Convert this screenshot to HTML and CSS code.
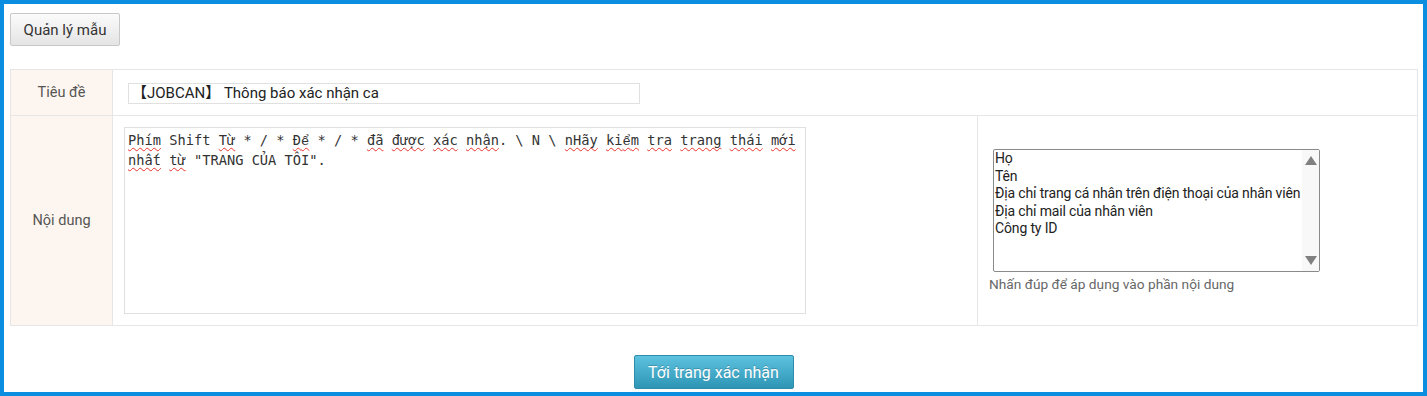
FILE: index.html
```html
<!DOCTYPE html>
<html>
<head>
  <title>Quản lý mẫu</title>
  <meta charset="utf-8">
  <link rel="stylesheet" href="styles.css">
</head>
<body>
  <div class="frame">
    <div class="toolbar">
      <button class="btn">Quản lý mẫu</button>
    </div>

    <table class="form">
      <colgroup>
        <col class="col-label">
        <col class="col-body">
        <col class="col-tags">
      </colgroup>
      <tr class="row-title">
        <th class="label">Tiêu đề</th>
        <td colspan="2" class="field title-cell">
          <div class="input">【JOBCAN】 Thông báo xác nhận ca</div>
        </td>
      </tr>
      <tr class="row-body">
        <th class="label">Nội dung</th>
        <td class="field body-cell">
          <div class="textarea"><span class="sp">Phím</span> Shift <span class="sp">Từ</span> * / * <span class="sp">Đ<span class="alt">ể</span></span> * / * <span class="sp">đã</span> <span class="sp">được</span> <span class="sp">xác</span> <span class="sp">nhận</span>. \ N \ <span class="sp">nHãy</span> <span class="sp">ki<span class="alt">ể</span>m</span> <span class="sp">tra</span> <span class="sp">trang</span> <span class="sp">thái</span> <span class="sp">mới</span> <span class="sp">nhất</span> <span class="sp">từ</span> "TRANG CỦA TÔI".</div>
        </td>
        <td class="field tags-cell">
          <div class="listbox">
            <ul class="items">
              <li>Họ</li>
              <li>Tên</li>
              <li>Địa chỉ trang cá nhân trên điện thoại của nhân viên</li>
              <li>Địa chỉ mail của nhân viên</li>
              <li>Công ty ID</li>
            </ul>
            <div class="scrollbar">
              <span class="arrow up"></span>
              <span class="arrow down"></span>
            </div>
          </div>
          <div class="hint">Nhấn đúp để áp dụng vào phần nội dung</div>
        </td>
      </tr>
    </table>

    <div class="actions">
      <button class="btn-primary">Tới trang xác nhận</button>
    </div>
  </div>
</body>
</html>
```

FILE: styles.css
```css
html, body {
  margin: 0;
  padding: 0;
  background: #fff;
  font-family: Roboto, "Noto Sans", "Noto Sans CJK JP", sans-serif;
  font-size: 14px;
  color: #333;
}

.frame {
  box-sizing: border-box;
  width: 1427px;
  height: 396px;
  border: 4px solid #0b8de0;
  padding: 9px 6px 0 6px;
}

/* Top toolbar */
.toolbar {
  height: 56px;
}

.btn {
  box-sizing: border-box;
  width: 110px;
  height: 33px;
  border: 1px solid #c8c8c8;
  border-radius: 2px;
  background: linear-gradient(#fbfbfb, #e4e4e4);
  font-family: Roboto, sans-serif;
  font-size: 15px;
  color: #333;
  padding: 0;
}

/* Form table */
.form {
  width: 1407px;
  border-collapse: collapse;
  table-layout: fixed;
}

.col-label { width: 102px; }
.col-body { width: 865px; }
.col-tags { width: 440px; }

.form th,
.form td {
  border: 1px solid #e6e6e6;
  padding: 0;
}

.form .label {
  background: #fdf5ef;
  color: #555;
  font-weight: normal;
  font-size: 14.5px;
  text-align: center;
}

.row-title {
  height: 46px;
}

.form .row-title .label {
  vertical-align: top;
  padding-top: 14px;
}

.row-body {
  height: 210px;
}

.field {
  vertical-align: middle;
}

.form .title-cell {
  padding-left: 15px;
  padding-top: 1px;
}

.input {
  box-sizing: border-box;
  width: 512px;
  height: 21px;
  border: 1px solid #e0e0e0;
  padding: 0 3px;
  font-size: 15px;
  line-height: 19px;
  color: #222;
}

.form .body-cell {
  vertical-align: top;
  padding: 11px 0 0 11px;
}

.textarea {
  box-sizing: border-box;
  width: 682px;
  height: 187px;
  border: 1px solid #e0e0e0;
  padding: 3px 3px;
  font-family: "DejaVu Sans Mono", monospace;
  font-size: 13.7px;
  line-height: 18px;
  color: #333;
}

.alt {
  font-family: "Liberation Mono", monospace;
}

.sp {
  text-decoration: underline wavy #e8342c;
  text-decoration-thickness: 1px;
  text-decoration-skip-ink: none;
  text-underline-offset: 2px;
}

/* Tag list */
.form .tags-cell {
  padding: 0 0 0 11px;
}

.listbox {
  box-sizing: border-box;
  width: 327px;
  height: 123px;
  margin-left: 4px;
  border: 1px solid #8a8a8a;
  border-radius: 2px;
  display: flex;
  background: #fff;
}

.items {
  flex: 1;
  list-style: none;
  margin: 0;
  padding: 0 1px;
  color: #222;
  font-size: 14px;
  letter-spacing: -0.15px;
  line-height: 17.5px;
  white-space: nowrap;
}

.scrollbar {
  width: 17px;
  background: #f8f8f8;
  display: flex;
  flex-direction: column;
  justify-content: space-between;
  align-items: center;
  padding: 6px 0;
}

.arrow {
  width: 0;
  height: 0;
  border-left: 6px solid transparent;
  border-right: 6px solid transparent;
}

.arrow.up {
  border-bottom: 9px solid #808080;
}

.arrow.down {
  border-top: 9px solid #808080;
}

.hint {
  margin-top: 4px;
  color: #666;
  font-size: 13.7px;
}

/* Bottom action */
.actions {
  display: flex;
  justify-content: center;
  padding-top: 29px;
}

.btn-primary {
  box-sizing: border-box;
  width: 160px;
  height: 34px;
  border: 1px solid #2f8cab;
  border-radius: 2px;
  background: linear-gradient(#5cc2df, #2f95b5);
  color: #fff;
  font-family: Roboto, sans-serif;
  font-size: 16px;
  text-shadow: 0 -1px 0 rgba(0, 0, 0, 0.2);
  padding: 0;
}
```
